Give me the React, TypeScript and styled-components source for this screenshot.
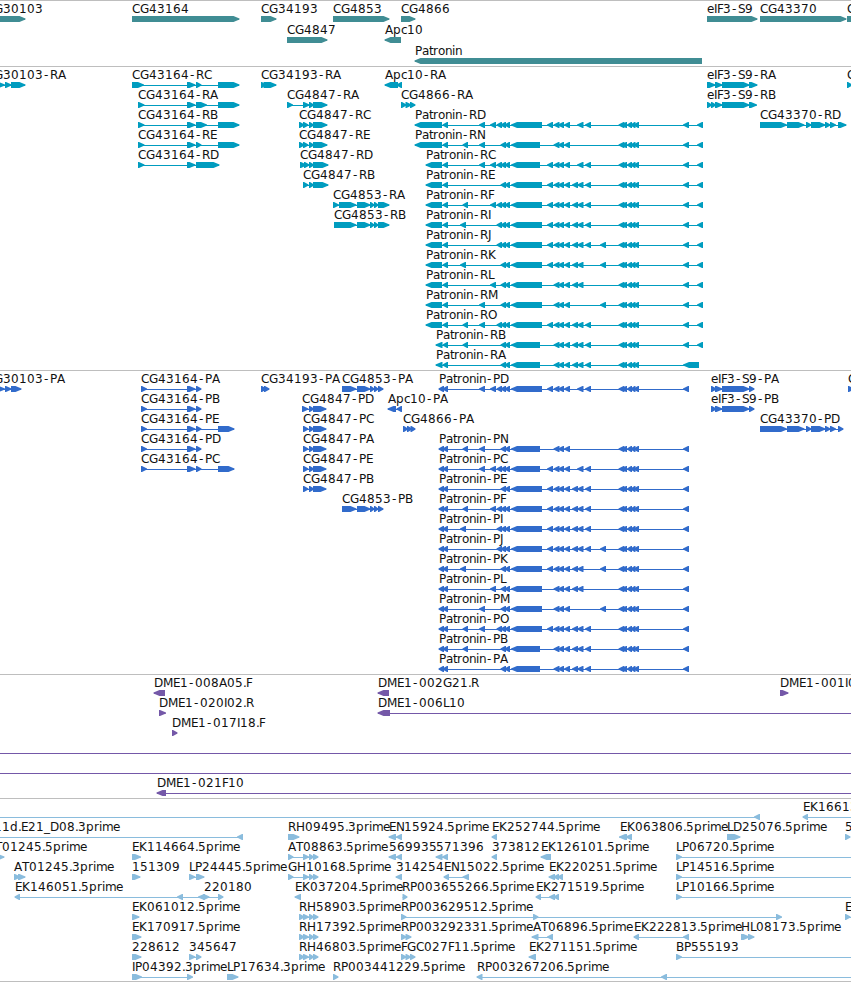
import React from "react";
import styled, { createGlobalStyle } from "styled-components";

const GlobalStyle = createGlobalStyle`
  html, body { margin: 0; padding: 0; background: #fff; overflow: hidden; }
`;

const Browser = styled.main`
  display: flex;
  flex-direction: column;
  width: 851px;
  height: 982px;
  overflow: hidden;
  background: #fff;
`;

const Track = styled.section<{ $color: string; $gap?: number; $end?: number }>`
  display: flex;
  flex-direction: column;
  flex: none;
  gap: ${(p) => p.$gap ?? 0}px;
  padding: 1px 0 ${(p) => p.$end ?? 2}px;
  border-top: 1px solid #bebebe;
  color: ${(p) => p.$color};
`;

const TrackEnd = styled.div`
  flex: none;
  height: 1px;
  background: #bebebe;
`;

const RowChart = styled.svg`
  display: block;
  flex: none;
  width: 851px;
  height: 20px;
  overflow: visible;
`;

const Label = styled.text`
  font-family: "DejaVu Sans", sans-serif;
  font-size: 12px;
  fill: #111;
  white-space: pre;
`;

type Span = [number, number];
type Direction = "left" | "right";
interface Feature {
  label: string;
  x: number;
  dir: Direction;
  spans: Span[];
  line?: Span;
}

/* Advance of each character in the labels; digits take 8px. */
const ADVANCE: Record<string, number> = {
  A: 8, B: 8, C: 8, D: 9, E: 7, F: 6, G: 9, H: 9, I: 3, J: 4, K: 8, L: 6, M: 10,
  N: 8, O: 9, P: 7, R: 8, S: 7, T: 7, a: 7, c: 6, d: 8, e: 7, i: 3, m: 11, n: 7,
  o: 7, p: 8, r: 5, t: 4, ".": 3, "-": 7, _: 6,
};

const glyphPositions = (text: string, start: number) => {
  let x = start;
  return Array.from(text, (c) => {
    const at = c === "-" ? x + 1 : x;
    x += ADVANCE[c] ?? 8;
    return at;
  }).join(" ");
};

const spansOf = (text: string): Span[] =>
  text
    ? text.split(" ").map((s) => {
        const [a, b] = s.split(":").map(Number);
        return [a, b] as Span;
      })
    : [];

const feature = (dir: Direction) => (label: string, x: number, spans: string, line?: Span): Feature => ({
  label,
  x,
  dir,
  spans: spansOf(spans),
  line,
});
const fwd = feature("right");
const rev = feature("left");

const arrowPath = ([a, b]: Span, dir: Direction) => {
  const head = Math.min(6, b - a - 0.5);
  return dir === "right"
    ? `M${a} 14H${b - head + 0.5}L${b + 0.5} 16.5V17.5L${b - head + 0.5} 20H${a}Z`
    : `M${b} 14H${a + head - 0.5}L${a - 0.5} 16.5V17.5L${a + head - 0.5} 20H${b}Z`;
};

function FeatureGlyph({ item }: { item: Feature }) {
  const xs = item.spans.flat();
  const [from, to] = item.line ?? [Math.min(...xs), Math.max(...xs)];
  return (
    <g fill="currentColor">
      <rect x={from} y={17} width={to - from} height={1} />
      {item.spans.map((s, i) => (
        <path key={i} d={arrowPath(s, item.dir)} />
      ))}
      {item.label && (
        <Label x={glyphPositions(item.label, item.x)} y={11}>
          {item.label}
        </Label>
      )}
    </g>
  );
}

function Rows({ rows }: { rows: Feature[][] }) {
  return (
    <>
      {rows.map((row, i) => (
        <RowChart key={i} viewBox="0 0 851 20">
          {row.map((item, j) => (
            <FeatureGlyph key={j} item={item} />
          ))}
        </RowChart>
      ))}
    </>
  );
}

/* Exons that the Patronin isoforms choose from, keyed by a letter. */
const PATRONIN_EXONS: Record<string, string> = {
  d: "460.5:466",
  e: "463:468",
  g: "479.5:485",
  h: "490.5:496",
  t: "497:502",
  B: "511.5:542",
  b: "511.5:540",
  j: "547.5:553",
  p: "572.5:578",
  q: "577.5:583.5",
  r: "585.5:591",
  s: "600.5:606",
};
const patronin = (name: string, start: string, code: string, end: string): Feature =>
  rev(
    `Patronin-${name}`,
    parseFloat(start),
    [
      start,
      "443:448",
      ...code.split("").map((c) => PATRONIN_EXONS[c]),
      "501:506 505:510 554:559.5 558.5:564 564.5:570",
      "619:624.5 622.5:627 627.5:632 631:635.5 634:639",
      end,
    ].join(" "),
  );
const LONG = "415:442";
const MID = "426:442";
const SHORT = "436:442.5";
const CDS = "439:444";
const R_END = "683.5:689 697.5:703";
const P_END = "683.5:689";

const genes: Feature[][] = [
  [
    fwd("CG30103", -14, "-14:25"),
    fwd("CG43164", 132, "132:239"),
    fwd("CG34193", 261, "261:276"),
    fwd("CG4853", 333, "333:389"),
    fwd("CG4866", 401, "401:415"),
    fwd("eIF3-S9", 707, "707:757"),
    fwd("CG43370", 760, "760:846"),
    fwd("CG43371", 847, "847:880"),
  ],
  [fwd("CG4847", 287, "287:327"), rev("Apc10", 385, "385:401")],
  [rev("Patronin", 415, "415:702")],
];

const transcripts: Feature[][] = [
  [
    fwd("CG30103-RA", -14, "-2:4.5 5:11 11:25"),
    fwd("CG43164-RC", 132, "132:143.5 187:195 196:201 218:239"),
    fwd("CG34193-RA", 261, "261:265 263.5:276"),
    rev("Apc10-RA", 385, "385:398 397:402"),
    fwd("eIF3-S9-RA", 707, "707:715 715:722 722:749 749:757"),
    fwd("CG43371-RA", 847, "847:852"),
  ],
  [
    fwd("CG43164-RA", 138, "138:144 187:195 196:206.5 218:239"),
    fwd("CG4847-RA", 287, "287:292.5 303:309 309:313.5 313:327"),
    fwd("CG4866-RA", 401, "401:406 405.5:411 410:415"),
    fwd("eIF3-S9-RB", 707, "707:711.5 711:715.5 715:722 722:749 749:756.5"),
  ],
  [
    fwd("CG43164-RB", 138, "138:144 187:195 196:206.5 218:239"),
    fwd("CG4847-RC", 299, "299:304 303:308 309:313.5 313:327"),
    patronin("RD", LONG, "ghtBjqr", R_END),
    fwd("CG43370-RD", 760, "760:786.5 787:804 806:811 811:825 825:830 830:835.5 838:846"),
  ],
  [
    fwd("CG43164-RE", 138, "138:144 187:195 196:201 218:239"),
    fwd("CG4847-RE", 299, "299:304 303:308 309:313.5 313:327"),
    patronin("RN", LONG, "egb", R_END),
  ],
  [
    fwd("CG43164-RD", 138, "138:144 187:195 196:219"),
    fwd("CG4847-RD", 300, "300:306 304:309 309:313.5 313:328"),
    patronin("RC", MID, "ghtbjqr", R_END),
  ],
  [fwd("CG4847-RB", 303, "303:308 309:313.5 313:328"), patronin("RE", MID, "Bjpqr", R_END)],
  [
    fwd("CG4853-RA", 333, "333:338.5 339:356 357:370 370:374 374:378 378:389"),
    patronin("RF", MID, "ehtBjpqr", R_END),
  ],
  [
    fwd("CG4853-RB", 334, "334:356 357:370 370:374 374:378 378:389"),
    patronin("RI", MID, "dtBjpqr", R_END),
  ],
  [patronin("RJ", MID, "tBjpqrs", R_END)],
  [patronin("RK", MID, "dBjpqs", R_END)],
  [patronin("RL", MID, "hBpq", R_END)],
  [patronin("RM", MID, "gBs", R_END)],
  [patronin("RO", MID, "egtBjpqr", R_END)],
  [patronin("RB", SHORT, "ebpqr", R_END)],
  [patronin("RA", SHORT, "bpqr", "683.5:699")],
];

const CG4847_CDS = "303:308 309:313.5 313:326";
const proteins: Feature[][] = [
  [
    fwd("CG30103-PA", -14, "-2:4.5 5:11 11:21"),
    fwd("CG43164-PA", 141, "141:146.5 187:195 196:201"),
    fwd("CG34193-PA", 261, "261:266 264:269"),
    fwd("CG4853-PA", 342, "342:356 357:370 370:374 374:378 378:383"),
    patronin("PD", CDS, "ghtBjqr", P_END),
    fwd("eIF3-S9-PA", 711, "711:716 715:722 722:749 749:754"),
    fwd("CG43371-PA", 848, "848:853"),
  ],
  [
    fwd("CG43164-PB", 141, "141:146.5 187:195 196:201"),
    fwd("CG4847-PD", 302, "302:308 309:313.5 313:326"),
    rev("Apc10-PA", 388, "388:396 397:402"),
    fwd("eIF3-S9-PB", 711, "711:716 715:722 722:749 749:754"),
  ],
  [
    fwd("CG43164-PE", 141, "141:146.5 187:195 196:201 218:234"),
    fwd("CG4847-PC", 303, CG4847_CDS),
    fwd("CG4866-PA", 403, "403:407.5 407:411.5 410.5:415"),
    fwd("CG43370-PD", 760, "760:786.5 787:804 806:811 811:825 825:830 830:835.5 838:843"),
  ],
  [
    fwd("CG43164-PD", 141, "141:146.5 187:195 196:201"),
    fwd("CG4847-PA", 303, CG4847_CDS),
    patronin("PN", CDS, "egb", P_END),
  ],
  [
    fwd("CG43164-PC", 141, "141:146.5 187:195 196:201 218:234"),
    fwd("CG4847-PE", 303, CG4847_CDS),
    patronin("PC", CDS, "ghtbjqr", P_END),
  ],
  [fwd("CG4847-PB", 303, CG4847_CDS), patronin("PE", CDS, "Bjpqr", P_END)],
  [
    fwd("CG4853-PB", 342, "342:356 357:370 370:374 374:378 378:383"),
    patronin("PF", CDS, "ehtBjpqr", P_END),
  ],
  [patronin("PI", CDS, "dtBjpqr", P_END)],
  [patronin("PJ", CDS, "tBjpqrs", P_END)],
  [patronin("PK", CDS, "dBjpqs", P_END)],
  [patronin("PL", CDS, "hBpq", P_END)],
  [patronin("PM", CDS, "gBs", P_END)],
  [patronin("PO", CDS, "egtBjpqr", P_END)],
  [patronin("PB", CDS, "ebpqr", P_END)],
  [patronin("PA", CDS, "bpqr", P_END)],
];

const clones: Feature[][] = [
  [
    rev("DME1-008A05.F", 154, "154:165"),
    rev("DME1-002G21.R", 378, "378:389"),
    fwd("DME1-001I02.F", 780, "780:788"),
  ],
  [fwd("DME1-020I02.R", 159, "159:165.5"), rev("DME1-006L10", 378, "378:390", [378, 851])],
  [fwd("DME1-017I18.F", 172, "172:177")],
  [fwd("", 0, "", [0, 851])],
  [fwd("", 0, "", [0, 851])],
  [rev("DME1-021F10", 157, "157:166", [157, 851])],
];

const RH_EXONS = "299:304 303:308.5 309:313.5 313:318";
const AT_EXONS = "288:293 303:308.5 309:313.5 313:318";
const ests: Feature[][] = [
  [rev("", 0, "754.5:760", [0, 760]), rev("EK166130.5prime", 803, "803:808", [803, 851])],
  [
    rev("11d.E21_D08.3prime", -6, "237.5:243", [0, 243]),
    fwd("RH09495.3prime", 288, "288:299"),
    rev("EN15924.5prime", 389, "389:396 396.5:402"),
    rev("EK252744.5prime", 492, "492:497"),
    rev("EK063806.5prime", 620, "619.5:627 626:632"),
    fwd("LD25076.5prime", 727, "727:740"),
    fwd("571396", 845, "845:850"),
  ],
  [
    fwd("AT01245.5prime", -13, "-6:4"),
    fwd("EK114664.5prime", 132, "132:140.5"),
    fwd("AT08863.5prime", 288, AT_EXONS),
    rev("569935", 389, "389:396 396.5:402"),
    rev("571396", 436, "436:442.5 442.5:448"),
    rev("373812", 492, "492:497"),
    rev("EK126101.5prime", 541, "541:551"),
    fwd("LP06720.5prime", 676, "676:681.5", [676, 851]),
  ],
  [
    fwd("AT01245.3prime", 14, "14:20 18:25"),
    fwd("151309", 132, "132:140"),
    fwd("LP24445.5prime", 189, "189:195 196:204"),
    fwd("GH10168.5prime", 288, AT_EXONS),
    rev("314254", 396, "396:402"),
    rev("EN15022.5prime", 444, "444:449 463:469"),
    rev("EK220251.5prime", 549, "549:555 554:559 558:563"),
    fwd("LP14516.5prime", 676, "676:681.5", [676, 851]),
  ],
  [
    rev("EK146051.5prime", 15, "15:20 177.5:183 198.5:205", [15, 205]),
    fwd("220180", 204, "203:209 218:223"),
    rev("EK037204.5prime", 295, "295:301"),
    fwd("RP003655266.5prime", 402, "402.5:407"),
    rev("EK271519.5prime", 536, "536:541 549.5:555 554:559"),
    fwd("LP10166.5prime", 676, "676:681.5", [676, 851]),
  ],
  [
    fwd("EK061012.5prime", 132, "132:139"),
    fwd("RH58903.5prime", 299, RH_EXONS),
    fwd("RP003629512.5prime", 401, "401:406 533:538 776:781.5"),
    fwd("EK166130.5prime", 845, "845:850", [845, 851]),
  ],
  [
    fwd("EK170917.5prime", 132, "132:141"),
    fwd("RH17392.5prime", 299, RH_EXONS),
    fwd("RP003292331.5prime", 401, "401:406 405.5:411"),
    rev("AT06896.5prime", 533, "532:538.5 547.5:553"),
    rev("EK222813.5prime", 634, "634:639 683.5:689"),
    fwd("HL08173.5prime", 741, "741:749 748:754"),
  ],
  [
    fwd("228612", 132, "132:141"),
    fwd("345647", 189, "189:195 196:201"),
    fwd("RH46803.5prime", 299, RH_EXONS),
    fwd("FGC027F11.5prime", 401, "401:406 405.5:410.5 410:415"),
    rev("EK271151.5prime", 529, "529:536"),
    fwd("BP555193", 676, "676:681.5", [676, 851]),
  ],
  [
    fwd("IP04392.3prime", 132, "132:141.5 187:192.5"),
    fwd("LP17634.3prime", 227, "227:238"),
    fwd("RP003441229.5prime", 333, "333:338"),
    rev("RP003267206.5prime", 477, "477:482.5 661.5:667", [477, 851]),
  ],
];

export default function App() {
  return (
    <>
      <GlobalStyle />
      <Browser>
        <Track $color="#408d94" $gap={1}>
          <Rows rows={genes} />
        </Track>
        <Track $color="#009cbf">
          <Rows rows={transcripts} />
        </Track>
        <Track $color="#316bcb">
          <Rows rows={proteins} />
        </Track>
        <Track $color="#7458a8">
          <Rows rows={clones} />
        </Track>
        <Track $color="#8abcdd" $end={1}>
          <Rows rows={ests} />
        </Track>
        <TrackEnd />
      </Browser>
    </>
  );
}
